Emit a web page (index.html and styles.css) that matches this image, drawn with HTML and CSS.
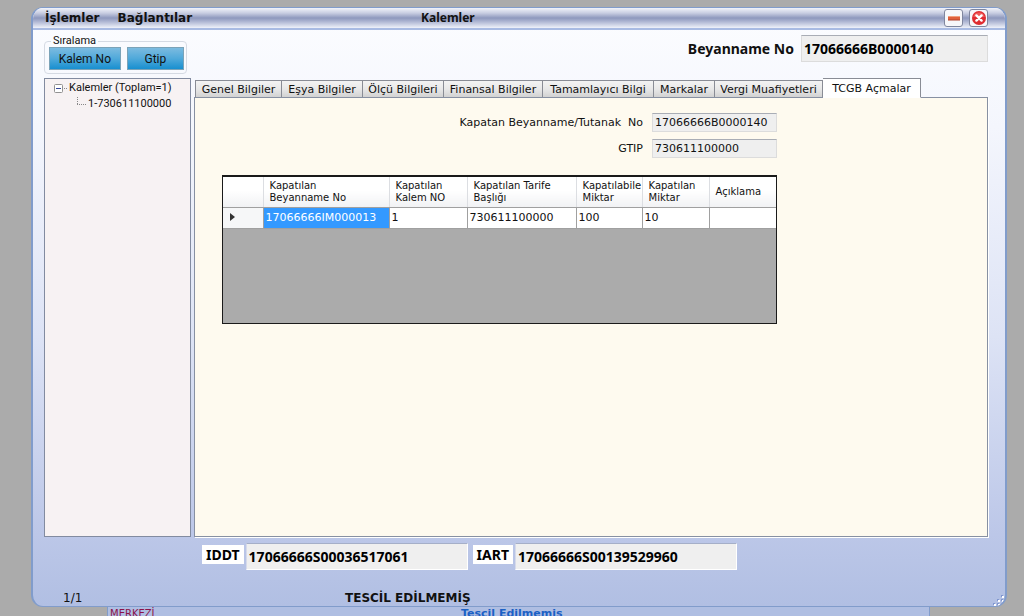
FILE: index.html
```html
<!DOCTYPE html>
<html lang="tr">
<head>
<meta charset="utf-8">
<title>Kalemler</title>
<link rel="stylesheet" href="styles.css">
</head>
<body>
<main class="window">
  <header class="titlebar">
    <nav class="menu">
      <button type="button">İşlemler</button>
      <button type="button">Bağlantılar</button>
    </nav>
    <h1 class="title">Kalemler</h1>
    <div class="controls">
      <button type="button" aria-label="Küçült">
        <svg width="16" height="16" viewBox="0 0 16 16"><rect x="2" y="6" width="12" height="4" fill="#e0603c"/><path d="M2 6.5h12" stroke="#f0a080"/><path d="M2 10h12" stroke="#b0402a"/></svg>
      </button>
      <button type="button" aria-label="Kapat">
        <svg width="16" height="16" viewBox="0 0 16 16"><circle cx="8" cy="8" r="7" fill="#df2c31"/><path d="M2.2 7a6 6 0 0 1 11.6 0" fill="#ee5a58"/><path d="M5.4 5.4l5.2 5.2M10.6 5.4l-5.2 5.2" stroke="#fff" stroke-width="2.4" stroke-linecap="round"/></svg>
      </button>
    </div>
  </header>

  <section class="toolbar">
    <fieldset class="sort">
      <legend>Sıralama</legend>
      <button type="button" class="wide">Kalem No</button>
      <button type="button">Gtip</button>
    </fieldset>
    <div class="declaration">
      <label for="beyanname">Beyanname No</label>
      <input id="beyanname" class="field strong" value="17066666B0000140" readonly>
    </div>
  </section>

  <section class="workspace">
    <aside class="tree">
      <ul>
        <li>
          <div class="node"><svg width="16" height="14" viewBox="0 0 16 14"><rect x="1.500" y="3.500" width="8" height="8" rx="1" fill="#fff" stroke="#919191"/><path d="M3 7.500h5" stroke="#35489a"/><path d="M11 7.500h4" stroke="#888" stroke-dasharray="1 1"/></svg>Kalemler (Toplam=1)</div>
          <ul class="children">
            <li class="node"><svg width="12" height="14" viewBox="0 0 12 14"><path d="M1.500 0v8" stroke="#888" stroke-dasharray="1 1"/><path d="M1 7.500h9" stroke="#888" stroke-dasharray="1 1"/></svg>1-730611100000</li>
          </ul>
        </li>
      </ul>
    </aside>

    <div class="tabs">
      <div class="tablist" role="tablist">
        <button type="button" role="tab" class="tab w87">Genel Bilgiler</button>
        <button type="button" role="tab" class="tab w81">Eşya Bilgiler</button>
        <button type="button" role="tab" class="tab w81">Ölçü Bilgileri</button>
        <button type="button" role="tab" class="tab w99">Finansal Bilgiler</button>
        <button type="button" role="tab" class="tab w111">Tamamlayıcı Bilgi</button>
        <button type="button" role="tab" class="tab w61">Markalar</button>
        <button type="button" role="tab" class="tab w108">Vergi Muafiyetleri</button>
        <button type="button" role="tab" class="tab active" aria-selected="true">TCGB Açmalar</button>
      </div>
      <div class="panel" role="tabpanel">
        <div class="content">
          <div class="form">
            <label for="kapatan">Kapatan Beyanname/Tutanak&nbsp; No</label>
            <input id="kapatan" class="field" value="17066666B0000140" readonly>
            <label for="gtip">GTIP</label>
            <input id="gtip" class="field" value="730611100000" readonly>
          </div>
          <div class="grid">
            <table>
              <colgroup><col class="c40"><col class="c126"><col class="c78"><col class="c109"><col class="c66"><col class="c67"><col></colgroup>
              <thead>
                <tr>
                  <th></th>
                  <th>Kapatılan<br>Beyanname No</th>
                  <th>Kapatılan<br>Kalem NO</th>
                  <th>Kapatılan Tarife<br>Başlığı</th>
                  <th>Kapatılabile<br>Miktar</th>
                  <th>Kapatılan<br>Miktar</th>
                  <th>Açıklama</th>
                </tr>
              </thead>
              <tbody>
                <tr>
                  <td class="rowhead"><svg width="6" height="8" viewBox="0 0 6 8"><path d="M0 0l5 4-5 4z" fill="#333"/></svg></td>
                  <td class="selected">17066666IM000013</td>
                  <td>1</td>
                  <td>730611100000</td>
                  <td>100</td>
                  <td>10</td>
                  <td></td>
                </tr>
              </tbody>
            </table>
          </div>
        </div>
      </div>
    </div>
  </section>

  <section class="receipts">
    <label for="iddt">IDDT</label>
    <input id="iddt" class="field strong" value="17066666S00036517061" readonly>
    <label for="iart">IART</label>
    <input id="iart" class="field strong" value="17066666S00139529960" readonly>
  </section>

  <footer class="status">
    <span>1/1</span>
    <strong>TESCİL EDİLMEMİŞ</strong>
    <svg width="12" height="12" viewBox="0 0 12 12"><g fill="#8197cf"><path d="M9 1h2v2H9zM5 5h2v2H5zM9 5h2v2H9zM1 9h2v2H1zM5 9h2v2H5zM9 9h2v2H9z"/></g><g fill="#fff"><path d="M10 2h2v2h-2zM6 6h2v2H6zM10 6h2v2h-2zM2 10h2v2H2zM6 10h2v2H6zM10 10h2v2h-2z"/></g></svg>
  </footer>
</main>
<div class="behind">
  <span>MERKEZİ</span>
  <strong>Tescil Edilmemiş</strong>
</div>
</body>
</html>
```
FILE: styles.css
```css
* { box-sizing: border-box; }

body {
  margin: 0;
  height: 100vh;
  padding: 7px 17px 0 31px;
  display: flex;
  flex-direction: column;
  overflow: hidden;
  background: #ababab;
  color: #111;
  font-family: "DejaVu Sans", sans-serif;
  font-size: 11px;
}

button, input {
  font: inherit;
  color: inherit;
  margin: 0;
}

.window {
  flex: 1;
  min-height: 0;
  display: flex;
  flex-direction: column;
  border: 2px solid #819ccb;
  border-top-width: 1px;
  border-bottom-width: 1px;
  border-radius: 12px;
  overflow: hidden;
  background: linear-gradient(#fcfdff, #f4f6fd 20%, #dde3f5 55%, #bcc7e8 88%, #b1bfe3);
}

.titlebar {
  height: 22px;
  flex: none;
  display: grid;
  grid-template-columns: 388px 1fr auto;
  align-items: center;
  padding: 0 17px 0 0;
  border-bottom: 2px solid #a9bbe3;
  background: linear-gradient(#f1f3fa, #c9cee2 25%, #8e98bd 50%, #a9b1cf 65%, #eff2fa);
}

.menu {
  display: flex;
  gap: 18px;
  padding-left: 12px;
}

.menu button {
  border: 0;
  padding: 0;
  background: none;
  font-size: 12px;
  font-weight: bold;
}

.title {
  margin: 0;
  font: bold 12px/16px "Noto Sans", sans-serif;
}

.controls {
  display: flex;
  gap: 6px;
}

.controls button {
  width: 19px;
  height: 18px;
  padding: 0;
  border: 1px solid #7f869e;
  border-radius: 3px;
  background: #f7f7fa;
  display: grid;
  place-items: center;
}

.toolbar {
  height: 48px;
  flex: none;
  display: flex;
  justify-content: space-between;
  padding: 5px 17px 4px 11px;
}

.sort {
  margin: 0;
  width: 143px;
  padding: 0 2px 2px 4px;
  display: flex;
  gap: 6px;
  border: 1px solid #d5dae3;
  border-radius: 4px;
  font: 12px/12px Roboto, sans-serif;
}

.sort legend {
  padding: 0 2px;
  margin-left: 2px;
  font-size: 11px;
}

.sort button {
  flex: 57;
  height: 23px;
  padding: 0;
  border: 1px solid #7ba3b8;
  background: linear-gradient(#7cbbe0, #50a9da 50%, #188fd0);
}

.sort .wide { flex: 72; }

.declaration {
  display: flex;
  align-items: center;
  align-self: flex-start;
  gap: 7px;
  font: bold 14px/18px "Noto Sans", sans-serif;
}

.declaration .field { width: 187px; }

.field {
  min-width: 0;
  height: 19px;
  padding: 0 2px;
  border: 1px solid #dcdcdc;
  border-top-color: #a9adb5;
  border-radius: 0;
  background: #efefef;
}

.strong {
  height: 27px;
  font: bold 14px/18px "Noto Sans", sans-serif;
  color: #000;
}

.workspace {
  flex: 1;
  min-height: 0;
  display: flex;
  gap: 3px;
  padding: 0 17px 0 11px;
}

.tree {
  width: 147px;
  flex: none;
  padding: 1px 0 0 8px;
  border: 1px solid #828ba0;
  background: #f7f2f3;
  font: 11px/16px Roboto, sans-serif;
}

.tree ul {
  margin: 0;
  padding: 0;
  list-style: none;
}

.tree .children { padding-left: 23px; }

.node {
  display: flex;
  align-items: center;
  white-space: nowrap;
}

.tabs {
  flex: 1;
  min-width: 0;
  display: flex;
  flex-direction: column;
}

.tablist {
  height: 20px;
  flex: none;
  display: flex;
  align-items: flex-end;
  padding-left: 1px;
}

.tab {
  height: 18px;
  padding: 0;
  border: 1px solid #898c95;
  border-left-width: 0;
  background: linear-gradient(#f3f3f3, #e8e8e8 50%, #d2d2d2);
  white-space: nowrap;
}

.tab:first-child { border-left-width: 1px; }
.w87 { width: 87px; }
.w81 { width: 81px; }
.w99 { width: 99px; }
.w111 { width: 111px; }
.w61 { width: 61px; }
.w108 { width: 108px; }

.active {
  position: relative;
  z-index: 1;
  width: 98px;
  height: 20px;
  border-bottom-color: #fff;
  background: #fff;
}

.panel {
  flex: 1;
  min-height: 0;
  margin-top: -1px;
  padding: 15px 27px;
  border: 1px solid #8790a2;
  background: #fefaef;
  box-shadow: 1px 1px #fff;
}

.content { max-width: 555px; }

.form {
  display: grid;
  grid-template-columns: 1fr 125px;
  gap: 7px 9px;
  align-items: center;
  justify-items: end;
}

.form .field { width: 100%; }

.grid {
  height: 149px;
  margin-top: 17px;
  border: 1px solid #1a1a1a;
  border-top-width: 2px;
  background: #ababab;
}

.grid table {
  width: 100%;
  table-layout: fixed;
  border-collapse: collapse;
}

.c40 { width: 40px; }
.c126 { width: 126px; }
.c78 { width: 78px; }
.c109 { width: 109px; }
.c66 { width: 66px; }
.c67 { width: 67px; }

.grid th {
  height: 30px;
  padding: 0 0 0 6px;
  border-right: 1px solid #dcdee2;
  border-bottom: 1px solid #a0a0a0;
  background: linear-gradient(#fff 45%, #f1f2f4);
  font-size: 10px;
  line-height: 12px;
  font-weight: normal;
  text-align: left;
  white-space: nowrap;
}

.grid td {
  height: 21px;
  padding: 0 2px;
  border-right: 1px solid #a0a0a0;
  border-bottom: 1px solid #a0a0a0;
  background: #fff;
  white-space: nowrap;
}

.grid th:last-child, .grid td:last-child { border-right: 0; }
.grid .rowhead { padding-left: 7px; background: #f6f7f8; }
.grid .selected { background: #3399ff; color: #fff; }

.receipts {
  flex: none;
  display: flex;
  align-items: flex-start;
  padding: 6px 0 0 169px;
}

.receipts label {
  margin: 2px 2px 0 0;
  padding: 0 4px;
  background: #fff;
  color: #000;
  font: bold 14px/19px "Noto Sans", sans-serif;
}

.receipts .field {
  width: 222px;
  margin-right: 5px;
  border-color: #a5afc8 #fff #fff #d6daea;
}

.status {
  height: 36px;
  flex: none;
  display: grid;
  grid-template-columns: 282px 1fr auto;
  align-items: end;
  padding: 0 1px 0 30px;
  line-height: 16px;
  font-size: 12px;
}

.behind {
  height: 9px;
  flex: none;
  display: grid;
  grid-template-columns: 351px 1fr;
  margin: 0 77px 0 76px;
  padding-left: 2px;
  border: solid #819ccb;
  border-width: 0 1px;
  overflow: hidden;
  background: #afbee2;
  font-size: 11px;
  line-height: 13px;
}

.behind span { color: #8b1249; font-size: 10px; }
.behind strong { color: #1b61c5; }
```
